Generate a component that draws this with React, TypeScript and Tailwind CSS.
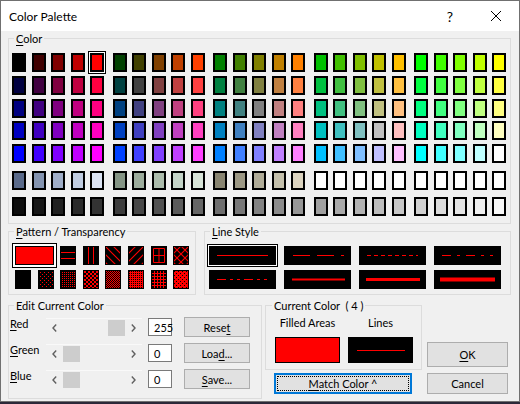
import React from 'react';

const hex = (n: number) => n.toString(16).padStart(2, '0');
const levels = [0x00, 0x40, 0x80, 0xc0, 0xff];

// blue steps per row, green per group, red per column
const mainRows = levels.map((b) =>
  levels.flatMap((g) => levels.map((r) => `#${hex(r)}${hex(g)}${hex(b)}`))
);

const tintRow = [
  '#5a6a8a', '#8494b0', '#a0aec8', '#c0cce0', '#dce4f4',
  '#849484', '#9cac9c', '#acbcac', '#c4d4c8', '#d8e4d8',
  '#888470', '#9c9884', '#b0ac98', '#c4c0ac', '#dcd4c0',
  ...Array(10).fill('#ffffff'),
];

const grayRow = Array.from({ length: 25 }, (_, i) => {
  const v = Math.round(12 + (i * (248 - 12)) / 24);
  return `#${hex(v)}${hex(v)}${hex(v)}`;
});

function Mn({ children }: { children: React.ReactNode }) {
  return <span className="underline decoration-1 underline-offset-[2px]">{children}</span>;
}

function SwatchRow({ colors, selected = -1, className = '' }: { colors: string[]; selected?: number; className?: string }) {
  return (
    <div className={`flex gap-[5.5px] ${className}`}>
      {colors.map((c, i) => (
        <div
          key={i}
          className={`h-[19px] w-[14px] border-2 border-black ${i > 0 && i % 5 === 0 ? 'ml-[3px]' : ''} ${
            i === selected ? 'shadow-[0_0_0_1px_#fff,0_0_0_2px_#000]' : ''
          }`}
          style={{ backgroundColor: c }}
        />
      ))}
    </div>
  );
}

function PixelTile({ id, size, cells, bg = '#000', ink = '#f00' }: { id: string; size: number; cells: [number, number][]; bg?: string; ink?: string }) {
  return (
    <svg width="16" height="19" viewBox="0 0 16 19" shapeRendering="crispEdges" className="block">
      <defs>
        <pattern id={id} width={size} height={size} patternUnits="userSpaceOnUse">
          <rect width={size} height={size} fill={bg} />
          {cells.map(([x, y]) => (
            <rect key={`${x}-${y}`} x={x} y={y} width="1" height="1" fill={ink} />
          ))}
        </pattern>
      </defs>
      <rect width="16" height="19" fill="#000" />
      <rect x="1" y="1" width="14" height="17" fill={`url(#${id})`} />
    </svg>
  );
}

function LineTile({ children }: { children: React.ReactNode }) {
  return (
    <svg width="16" height="19" viewBox="0 0 16 19" className="block">
      <rect width="16" height="19" fill="#000" />
      <g stroke="#f00" strokeWidth="1" fill="none">{children}</g>
    </svg>
  );
}

function DiagTile({ id, d }: { id: string; d: string }) {
  return (
    <svg width="16" height="19" viewBox="0 0 16 19" className="block">
      <defs>
        <pattern id={id} width="8" height="8" patternUnits="userSpaceOnUse">
          <path d={d} stroke="#f00" strokeWidth="1.1" fill="none" />
        </pattern>
      </defs>
      <rect width="16" height="19" fill="#000" />
      <rect x="1" y="1" width="14" height="17" fill={`url(#${id})`} />
    </svg>
  );
}

function LineSample({ dash, width = 1, x1 = 8, x2 = 59 }: { dash?: string; width?: number; x1?: number; x2?: number }) {
  return (
    <svg width="67" height="19" viewBox="0 0 67 19" className="block">
      <rect width="67" height="19" fill="#000" />
      <line x1={x1} x2={x2} y1="9.5" y2="9.5" stroke="#f00" strokeWidth={width} strokeDasharray={dash} />
    </svg>
  );
}

function EditRow({ label, value, thumbRight, button }: { label: React.ReactNode; value: string; thumbRight?: boolean; button: React.ReactNode }) {
  return (
    <div className="flex h-[26px] items-center">
      <span className="mb-[8px] w-[36px]">{label}</span>
      <div className="flex h-[18px] w-[96px] border-t border-[#f9f9f9] bg-[#f0f0f0]">
        <div className="flex w-[17px] items-center justify-center">
          <svg width="5" height="8" viewBox="0 0 5 8"><path d="M4.2 0.6 L1 4 L4.2 7.4" stroke="#606060" strokeWidth="1.4" fill="none" /></svg>
        </div>
        <div className="flex flex-1 items-center">
          <div className={`h-[16px] w-[17px] bg-[#cdcdcd] ${thumbRight ? 'ml-auto' : ''}`} />
        </div>
        <div className="flex w-[17px] items-center justify-center">
          <svg width="5" height="8" viewBox="0 0 5 8"><path d="M0.8 0.6 L4 4 L0.8 7.4" stroke="#606060" strokeWidth="1.4" fill="none" /></svg>
        </div>
      </div>
      <div className="ml-[6px] flex h-[18px] w-[24px] items-center border border-[#7a7a7a] bg-white pl-[5px]">{value}</div>
      <button className="ml-[12px] h-[20px] w-[66px] border border-[#adadad] bg-[#e1e1e1] text-center">{button}</button>
    </div>
  );
}

export default function App() {
  return (
    <div className="h-[404px] w-[520px] bg-[#2b2838] font-['Lato',sans-serif] text-[11px] leading-[15px] text-black">
      <div className="flex h-[402px] w-[520px] flex-col border border-[#707070] bg-[#f0f0f0]">
        {/* title bar */}
        <div className="flex h-[30px] items-center bg-white pl-[8px]">
          <span className="text-[12px]">Color Palette</span>
          <span className="ml-auto flex w-[46px] justify-center text-[14px]">?</span>
          <span className="flex w-[46px] justify-center">
            <svg width="10" height="10" viewBox="0 0 10 10"><path d="M0 0L10 10M10 0L0 10" stroke="#000" strokeWidth="1" /></svg>
          </span>
        </div>

        <div className="flex flex-col pl-[7px]">
          <fieldset className="h-[193px] w-[503px] border border-[#dcdcdc]">
            <legend className="ml-[5px] px-[2px]"><Mn>C</Mn>olor</legend>
            <div className="flex flex-col pl-[3px] pt-[7px]">
              <div className="flex flex-col gap-[3.8px]">
                {mainRows.map((row, i) => (
                  <SwatchRow key={i} colors={row} selected={i === 0 ? 4 : -1} />
                ))}
              </div>
              <SwatchRow colors={tintRow} className="mt-[7.5px]" />
              <SwatchRow colors={grayRow} className="mt-[7px]" />
            </div>
          </fieldset>

          <div className="flex gap-[8px]">
            <fieldset className="h-[71px] w-[188px] border border-[#dcdcdc]">
              <legend className="ml-[5px] px-[2px]"><Mn>P</Mn>attern / Transparency</legend>
              <div className="grid grid-cols-[repeat(8,16px)] gap-x-[6.6px] gap-y-[5px] pl-[6px] pt-[7px]">
                <div className="col-span-2 h-[19px] border border-black bg-[#ff0000] shadow-[0_0_0_2px_#fff,0_0_0_3px_#000]" />
                <LineTile><path d="M1 6.5H15M1 12.5H15" /></LineTile>
                <LineTile><path d="M5.5 1V18M10.5 1V18" /></LineTile>
                <DiagTile id="pat-bs" d="M0 0L8 8M-4 4L4 12M4 -4L12 4" />
                <DiagTile id="pat-fs" d="M8 0L0 8M12 4L4 12M4 -4L-4 4" />
                <LineTile><path d="M2.5 2.5H13.5V16.5H2.5ZM8 2.5V16.5M2.5 9.5H13.5" /></LineTile>
                <DiagTile id="pat-x" d="M0 0L8 8M8 0L0 8" />

                <div className="h-[19px] w-[16px] bg-black" />
                <PixelTile id="pat-d1" size={4} cells={[[0, 0], [2, 2]]} />
                <PixelTile id="pat-d2" size={2} cells={[[0, 0]]} />
                <PixelTile id="pat-d3" size={4} cells={[[0, 0], [1, 1], [2, 2], [3, 3], [0, 3], [1, 2], [2, 1], [3, 0]]} />
                <PixelTile id="pat-d4" size={2} cells={[[0, 0], [1, 1]]} />
                <PixelTile id="pat-d5" size={2} cells={[[0, 0], [1, 0], [0, 1]]} />
                <PixelTile id="pat-d6" size={3} cells={[[0, 0], [1, 0], [2, 0], [0, 1], [0, 2]]} />
                <PixelTile id="pat-d7" size={4} cells={[[1, 1], [3, 3]]} bg="#f00" ink="#000" />
              </div>
            </fieldset>

            <fieldset className="h-[71px] w-[307px] border border-[#dcdcdc]">
              <legend className="ml-[5px] px-[2px]"><Mn>L</Mn>ine Style</legend>
              <div className="grid grid-cols-[repeat(4,67px)] gap-x-[8px] gap-y-[5px] pl-[4px] pt-[7px]">
                <div className="shadow-[0_0_0_1px_#fff,0_0_0_2px_#000]"><LineSample /></div>
                <LineSample dash="17 7" x1={9} x2={60} />
                <LineSample dash="4 3" />
                <LineSample dash="9 6 3 6" />
                <LineSample dash="9 4 3 4 3 4" />
                <LineSample width={2} x1={8} x2={61} />
                <LineSample width={3} x1={7} x2={61} />
                <LineSample width={4} x1={6} x2={61} />
              </div>
            </fieldset>
          </div>

          <div className="mt-[3px] flex">
            <fieldset className="h-[101px] w-[254px] border border-[#dcdcdc]">
              <legend className="ml-[5px] px-[2px]">Edit Current Color</legend>
              <div className="flex flex-col pl-[1px] pt-[1px]">
                <EditRow label={<><Mn>R</Mn>ed</>} value="255" thumbRight button={<>Rese<Mn>t</Mn></>} />
                <EditRow label={<><Mn>G</Mn>reen</>} value="0" button={<>Loa<Mn>d</Mn>...</>} />
                <EditRow label={<><Mn>B</Mn>lue</>} value="0" button={<><Mn>S</Mn>ave...</>} />
              </div>
            </fieldset>

            <div className="ml-[3px] flex flex-col">
              <fieldset className="h-[72px] w-[157px] border border-[#dcdcdc]">
                <legend className="ml-[6px] px-[2px]">Current Color&nbsp; ( 4 )</legend>
                <div className="flex gap-[8px] pl-[9px] pt-[2px]">
                  <div className="flex w-[65px] flex-col items-center">
                    <span className="whitespace-nowrap">Filled Areas</span>
                    <div className="mt-[7px] h-[26px] w-[65px] border border-black bg-[#ff0000]" />
                  </div>
                  <div className="flex w-[65px] flex-col items-center">
                    <span>Lines</span>
                    <div className="mt-[7px] flex h-[26px] w-[65px] items-center justify-center bg-black">
                      <div className="h-px w-[48px] bg-[#ff0000]" />
                    </div>
                  </div>
                </div>
              </fieldset>
              <button className="ml-[9px] mt-[3px] h-[21px] w-[138px] border-2 border-[#0078d7] bg-[#e1e1e1] text-center outline-1 outline-dotted outline-black outline-offset-[-4px]">
                <Mn>M</Mn>atch Color ^
              </button>
            </div>

            <div className="ml-[5px] flex flex-col">
              <button className="mt-[44px] h-[25px] w-[81px] border border-[#adadad] bg-[#e1e1e1] text-center">
                <Mn>O</Mn>K
              </button>
              <button className="mt-[6px] h-[21px] w-[81px] border border-[#adadad] bg-[#e1e1e1] text-center">Cancel</button>
            </div>
          </div>
        </div>
      </div>
    </div>
  );
}
